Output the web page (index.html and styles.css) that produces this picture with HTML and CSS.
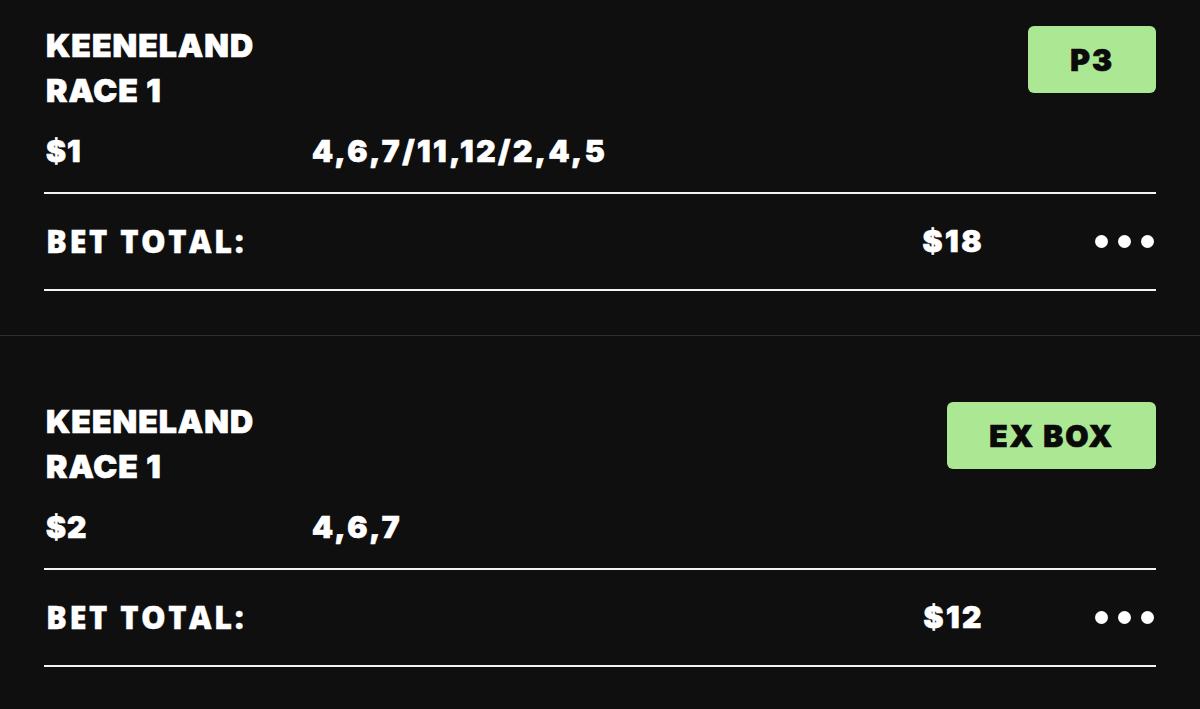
FILE: index.html
```html
<!DOCTYPE html>
<html lang="en">
<head>
<meta charset="utf-8">
<title>Bets</title>
<link rel="stylesheet" href="styles.css">
</head>
<body>
<div class="list">
  <section class="card">
    <div class="card-head">
      <div class="title">KEENELAND<br>RACE 1</div>
      <div class="badge">P3</div>
    </div>
    <div class="selection">
      <span class="stake">$1</span>
      <span class="picks">4,6,7/11,12/2,4,5</span>
    </div>
    <div class="total">
      <span class="total-label">BET TOTAL:</span>
      <span class="total-amount">$18</span>
      <span class="more" aria-label="More options"><i></i><i></i><i></i></span>
    </div>
  </section>
  <section class="card">
    <div class="card-head">
      <div class="title">KEENELAND<br>RACE 1</div>
      <div class="badge">EX BOX</div>
    </div>
    <div class="selection">
      <span class="stake">$2</span>
      <span class="picks">4,6,7</span>
    </div>
    <div class="total">
      <span class="total-label">BET TOTAL:</span>
      <span class="total-amount">$12</span>
      <span class="more" aria-label="More options"><i></i><i></i><i></i></span>
    </div>
  </section>
</div>
</body>
</html>
```

FILE: styles.css
```css
html, body {
  margin: 0;
  padding: 0;
}

body {
  background: #0f0f0f;
  color: #ffffff;
  font-family: Inter, "Noto Sans", sans-serif;
  overflow: hidden;
  height: 709px;
}

.list {
  margin-top: -40px;
}

.card {
  padding: 63px 44px 44px;
  border-bottom: 1px solid #2f2f32;
}

.card-head {
  display: flex;
  justify-content: space-between;
  align-items: flex-start;
}

.title {
  font-size: 32px;
  font-weight: 900;
  line-height: 45px;
  letter-spacing: 1px;
  padding-left: 2px;
  -webkit-text-stroke: 0.7px currentColor;
}

.badge {
  margin-top: 3px;
  height: 67px;
  padding: 0 42px;
  display: flex;
  align-items: center;
  background: #ace794;
  color: #0a0a0a;
  border-radius: 6px;
  font-size: 30px;
  font-weight: 900;
  letter-spacing: 2px;
  -webkit-text-stroke: 0.7px currentColor;
}

.selection {
  display: grid;
  grid-template-columns: 266px 1fr;
  margin-top: 18px;
  padding-left: 2px;
  font-size: 30px;
  font-weight: 900;
  line-height: 40px;
  letter-spacing: 1px;
  padding-bottom: 21px;
  border-bottom: 2px solid #f4f4f4;
  -webkit-text-stroke: 0.7px currentColor;
}

.picks {
  letter-spacing: 2.5px;
}

.total {
  display: flex;
  align-items: center;
  padding: 27px 0 28px;
  line-height: 40px;
  border-bottom: 2px solid #f4f4f4;
}

.total-label {
  flex: 1;
  padding-left: 2px;
  font-family: "Open Sans", sans-serif;
  font-size: 31px;
  font-weight: 800;
  letter-spacing: 2.5px;
  -webkit-text-stroke: 0.4px currentColor;
}

.total-amount {
  font-size: 30px;
  font-weight: 900;
  letter-spacing: 2.5px;
  margin-right: -2px;
  -webkit-text-stroke: 0.7px currentColor;
}

.more {
  display: flex;
  gap: 10px;
  margin-left: 113px;
  padding-right: 2px;
}

.more i {
  display: block;
  width: 13px;
  height: 13px;
  border-radius: 50%;
  background: #ffffff;
}
```
